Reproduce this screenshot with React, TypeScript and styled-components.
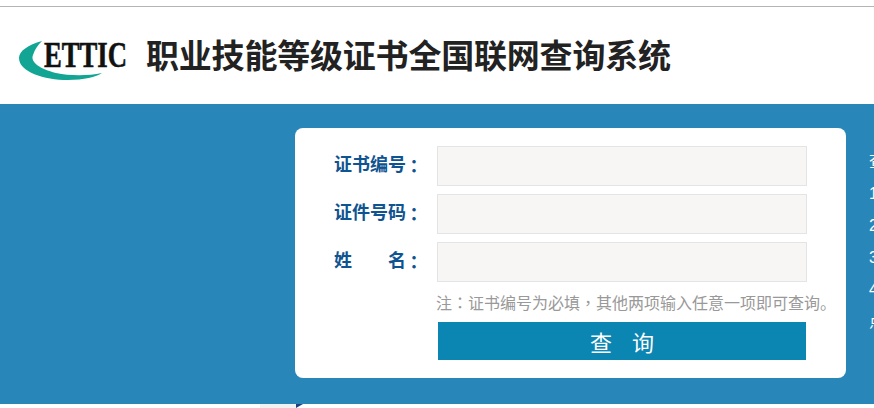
import React from 'react';
import styled, { createGlobalStyle } from 'styled-components';

const FONT = '"Liberation Sans", "Noto Sans CJK SC", sans-serif';

const GlobalStyle = createGlobalStyle`
  html, body {
    margin: 0;
    padding: 0;
    height: 408px;
    overflow: hidden;
    background: #fff;
    font-family: ${FONT};
  }
`;

const Page = styled.div`
  width: 874px;
  height: 408px;
  overflow: hidden;
  display: flex;
  flex-direction: column;
`;

//
// Header
//

const Header = styled.header`
  margin-top: 6px;
  height: 98px;
  flex-shrink: 0;
  border-top: 1px solid #b4b4b4;
  display: flex;
  align-items: center;
  padding-left: 18px;
  box-sizing: border-box;
  background: #fff;
`;

const Logo = styled.svg`
  width: 112px;
  height: 44px;
  flex-shrink: 0;
  margin-top: 9px;
`;

const LogoText = styled.text`
  font-family: "Liberation Serif", serif;
  font-weight: 700;
  font-size: 36px;
  fill: #111;
  stroke: #111;
  stroke-width: 0.6px;
`;

const SiteTitle = styled.h1`
  margin: 3px 0 0 16px;
  font-size: 33px;
  line-height: 40px;
  font-weight: 700;
  color: #222;
  letter-spacing: -0.2px;
  white-space: nowrap;
`;

//
// Band
//

const Band = styled.section`
  height: 300px;
  flex-shrink: 0;
  box-sizing: border-box;
  padding: 24px 0 0 295px;
  background: #2886b8;
  display: flex;
`;

const Card = styled.form`
  width: 551px;
  height: 250px;
  flex-shrink: 0;
  box-sizing: border-box;
  padding: 18px 0 0 40px;
  background: #fff;
  border-radius: 8px;
`;

const Row = styled.div`
  display: flex;
  align-items: center;
  height: 40px;
  margin-bottom: 8px;
`;

const Label = styled.label`
  width: 103px;
  margin-left: -1px;
  flex-shrink: 0;
  display: flex;
  padding-bottom: 3px;
  font-size: 18px;
  line-height: 24px;
  font-weight: 700;
  color: #0f5490;
`;

const LabelText = styled.span`
  width: 72px;
  display: flex;
  justify-content: space-between;
`;

// The traditional Chinese cut centres its colon and comma in the em box.
const Punct = styled.span`
  font-family: "Noto Sans CJK TC", sans-serif;
`;

const Colon = styled(Punct)`
  margin-left: -1px;
`;

const Input = styled.input`
  width: 370px;
  height: 40px;
  box-sizing: border-box;
  border: 1px solid #e4e4e4;
  background: #f7f6f5;
  outline: none;
`;

const Note = styled.p`
  margin: 1px 0 0 101px;
  height: 32px;
  font-size: 16px;
  line-height: 24px;
  color: #999;
  white-space: nowrap;
`;

const Submit = styled.button`
  display: block;
  margin-left: 103px;
  width: 368px;
  height: 38px;
  border: 0;
  padding: 0;
  background: #0b85b2;
  color: #fff;
  font-family: ${FONT};
  font-size: 22px;
  word-spacing: 4px;
  white-space: pre;
`;

const Side = styled.ul`
  list-style: none;
  margin: 0;
  padding: 18px 0 0 23px;
  flex-shrink: 0;
  width: 300px;
  color: #fff;
  font-size: 16px;
  line-height: 32px;
`;

const SideItem = styled.li`
  height: 32px;
  white-space: nowrap;
`;

//
// Below the band
//

const Below = styled.div`
  display: flex;
  align-items: flex-start;
  padding-left: 260px;
  height: 4px;
`;

const GreyTab = styled.div`
  width: 36px;
  height: 4px;
  background: #f1f1f1;
`;

const Arrow = styled.div`
  width: 0;
  height: 0;
  border-left: 7px solid #1f3f7a;
  border-bottom: 4px solid transparent;
`;

export default function App() {
  return (
    <Page>
      <GlobalStyle />
      <Header>
        <Logo viewBox="0 0 112 44">
          <path d="M24 3 C 10 7 1 13 1 20 C 1 34 26 42 50 42 C 66 42 78 39 84 35 C 70 38 52 38 38 35 C 22 31 12 24 15 17 C 17 11 20 7 24 3 Z" fill="#12a594" />
          <LogoText x="26" y="29" textLength="83" lengthAdjust="spacingAndGlyphs">ETTIC</LogoText>
        </Logo>
        <SiteTitle>职业技能等级证书全国联网查询系统</SiteTitle>
      </Header>
      <Band>
        <Card>
          <Row>
            <Label><LabelText>证书编号</LabelText><Colon>：</Colon></Label>
            <Input />
          </Row>
          <Row>
            <Label><LabelText>证件号码</LabelText><Colon>：</Colon></Label>
            <Input />
          </Row>
          <Row>
            <Label><LabelText><span>姓</span><span>名</span></LabelText><Colon>：</Colon></Label>
            <Input />
          </Row>
          <Note>注<Punct>：</Punct>证书编号为必填<Punct>，</Punct>其他两项输入任意一项即可查询。</Note>
          <Submit type="button">查  询</Submit>
        </Card>
        <Side>
          <SideItem>查询说明</SideItem>
          <SideItem>1</SideItem>
          <SideItem>2</SideItem>
          <SideItem>3</SideItem>
          <SideItem>4</SideItem>
          <SideItem>点</SideItem>
        </Side>
      </Band>
      <Below>
        <GreyTab />
        <Arrow />
      </Below>
    </Page>
  );
}
